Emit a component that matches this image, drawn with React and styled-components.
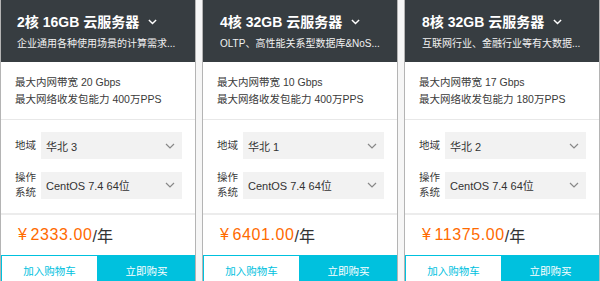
import React from "react";
import styled, { createGlobalStyle } from "styled-components";

const Global = createGlobalStyle`
  html, body { margin: 0; padding: 0; background: #f6f6f6; overflow: hidden; }
  body { font-family: "Liberation Sans", "Noto Sans CJK SC", sans-serif; }
`;

const Row = styled.div`
  display: flex;
  gap: 6px;
  width: 620px;
`;

const Card = styled.div`
  width: 196px;
  flex: none;
  box-sizing: border-box;
  border-left: 1px solid #b4b4b4;
  border-right: 1px solid #b4b4b4;
  background: #fff;
  display: flex;
  flex-direction: column;
`;

const Header = styled.div`
  background: #373d41;
  height: 62px;
  box-sizing: border-box;
  padding: 11px 10px 0 ${(p) => p.$pad}px;
  color: #fff;
`;

const Title = styled.div`
  display: flex;
  align-items: center;
  gap: 9px;
  font-size: 14px;
  font-weight: bold;
  line-height: 22px;
  white-space: nowrap;
`;

const Sub = styled.div`
  margin-top: 4px;
  font-size: 10px;
  line-height: 14px;
  white-space: nowrap;
  color: #f2f2f2;
`;

const Specs = styled.div`
  padding: 12px 14px 11px;
  border-bottom: 1px solid #e8e8e8;
  font-size: 10.5px;
  line-height: 17px;
  color: #3a3a3a;
`;

const Form = styled.div`
  padding: 12px 13px 13px 14px;
  display: flex;
  flex-direction: column;
  gap: 11px;
  border-bottom: 2px solid #ececec;
`;

const FormRow = styled.div`
  display: flex;
  align-items: center;
`;

const Label = styled.div`
  width: 26px;
  flex: none;
  font-size: 10.5px;
  line-height: 15px;
  color: #3a3a3a;
`;

const Select = styled.div`
  flex: 1;
  height: 27px;
  background: #f2f2f2;
  display: flex;
  align-items: center;
  justify-content: space-between;
  padding: 0 7px 0 5px;
  font-size: 11px;
  color: #333;
`;

const Price = styled.div`
  height: 40px;
  display: flex;
  align-items: center;
  padding-left: 17px;
  font-size: 16px;
  color: #333;
`;

const Amount = styled.span`
  color: #ff6a00;
  letter-spacing: 0.6px;
`;

const Yen = styled.span`
  margin-right: 3px;
`;

const Buttons = styled.div`
  display: flex;
  height: 30px;
`;

const Btn = styled.div`
  flex: 1;
  display: flex;
  align-items: center;
  justify-content: center;
  box-sizing: border-box;
  font-size: 10.5px;
  background: ${(p) => (p.$primary ? "#00c1de" : "#fff")};
  color: ${(p) => (p.$primary ? "#fff" : "#00c1de")};
  border: 1px solid #00c1de;
`;

const Chevron = ({ color = "#fff", size = 9, sw = 1.6 }) => (
  <svg width={size} height={size * 0.6} viewBox="0 0 10 6">
    <polyline points="1,1 5,5 9,1" fill="none" stroke={color} strokeWidth={sw} />
  </svg>
);

const data = [
  {
    title: "2核 16GB 云服务器",
    sub: "企业通用各种使用场景的计算需求...",
    bw: "20",
    pps: "400万",
    region: "华北 3",
    price: "2333.00",
    pad: 16,
  },
  {
    title: "4核 32GB 云服务器",
    sub: "OLTP、高性能关系型数据库&NoS...",
    bw: "10",
    pps: "400万",
    region: "华北 1",
    price: "6401.00",
    pad: 17,
  },
  {
    title: "8核 32GB 云服务器",
    sub: "互联网行业、金融行业等有大数据...",
    bw: "17",
    pps: "180万",
    region: "华北 2",
    price: "11375.00",
    pad: 17,
  },
];

export default function App() {
  return (
    <>
      <Global />
      <Row>
        {data.map((d) => (
          <Card key={d.title}>
            <Header $pad={d.pad}>
              <Title>
                {d.title}
                <Chevron />
              </Title>
              <Sub>{d.sub}</Sub>
            </Header>
            <Specs>
              <div>最大内网带宽 {d.bw} Gbps</div>
              <div>最大网络收发包能力 {d.pps}PPS</div>
            </Specs>
            <Form>
              <FormRow>
                <Label>地域</Label>
                <Select>
                  {d.region}
                  <Chevron color="#888" size={10} sw={1.2} />
                </Select>
              </FormRow>
              <FormRow>
                <Label>
                  操作
                  <br />
                  系统
                </Label>
                <Select>
                  CentOS 7.4 64位
                  <Chevron color="#888" size={10} sw={1.2} />
                </Select>
              </FormRow>
            </Form>
            <Price>
              <Amount>
                <Yen>¥</Yen>
                {d.price}
              </Amount>
              /年
            </Price>
            <Buttons>
              <Btn>加入购物车</Btn>
              <Btn $primary>立即购买</Btn>
            </Buttons>
          </Card>
        ))}
      </Row>
    </>
  );
}
